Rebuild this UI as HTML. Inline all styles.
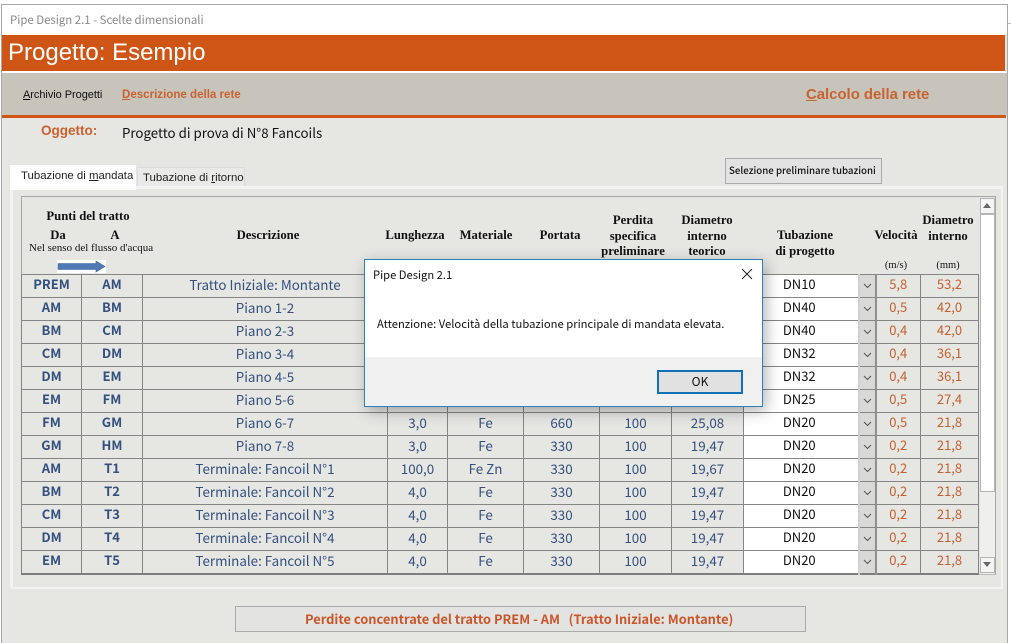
<!DOCTYPE html>
<html lang="it"><head><meta charset="utf-8"><title>Pipe Design 2.1</title>
<style>
html,body{margin:0;padding:0;background:#fff;width:1011px;height:643px;overflow:hidden}
body{position:relative;font-family:"Liberation Sans",sans-serif}
.a{position:absolute;white-space:nowrap}
.c{font-family:"Noto Sans CJK JP","Liberation Sans",sans-serif}
.s{font-family:"Liberation Serif",serif;font-weight:bold;font-size:12.7px;line-height:14px;color:#111;transform:translateX(-50%);text-align:center}
u{text-underline-offset:1px}
table{position:absolute;left:21px;top:274px;border-collapse:collapse;table-layout:fixed;width:957px;font-family:"Noto Sans CJK JP","Liberation Sans",sans-serif;font-size:13.4px;color:#34507f;text-align:center;border-bottom:2px solid #7d7d7d}
td{height:18px;padding:0 0 4px 0;border:1px solid #858585;line-height:18px;overflow:hidden;white-space:nowrap;box-sizing:content-box}
td.b{font-weight:bold;font-size:13px}
td.w{background:#fff;color:#111;border-right:0;padding-right:3px;font-size:13px}
td.d{background:#d9d9d7;padding:0;height:22px;border:1px solid #858585;border-width:1px 2px 1px 2px;border-color:#858585 #8f8f8f #858585 #d0d0ce}
td.o{color:#c4602f;font-size:13px}
td.d svg{display:block;margin:auto}
</style></head><body>

<div class="a" style="left:1006px;top:23px;width:5px;height:1px;background:#bbb"></div>
<div class="a" style="left:1px;top:4px;width:1007px;height:639px;background:#e6e6e3;border:1px solid #a8a8a8;border-bottom:0;box-sizing:border-box"></div>
<div class="a" style="left:2px;top:5px;width:1005px;height:30px;background:#fff"></div>
<div class="a c" style="left:10px;top:11px;font-size:11.4px;line-height:18px;color:#8a8a8a">Pipe Design 2.1 - Scelte dimensionali</div>
<div class="a" style="left:2px;top:35px;width:1003px;height:36px;background:#ce5516"></div>
<div class="a" style="left:2px;top:71px;width:1005px;height:2px;background:#fff"></div>
<div class="a" style="left:8px;top:38px;font-size:24px;line-height:29px;color:#fff">Progetto: Esempio</div>
<div class="a" style="left:2px;top:73px;width:1005px;height:42px;background:#c7c4bc"></div>
<div class="a" style="left:2px;top:115px;width:1004px;height:3px;background:#ce5516"></div>
<div class="a" style="left:23px;top:88px;font-size:11px;line-height:14px;letter-spacing:-.05px;color:#111"><u>A</u>rchivio Progetti</div>
<div class="a" style="left:122px;top:88px;font-size:11.55px;line-height:14px;font-weight:bold;color:#c9622f"><u>D</u>escrizione della rete</div>
<div class="a" style="left:806px;top:86px;font-size:14.9px;line-height:18px;font-weight:bold;color:#c9622f"><u>C</u>alcolo della rete</div>
<div class="a" style="left:41px;top:122px;font-size:13.5px;line-height:17px;font-weight:bold;color:#c9622f">Oggetto:</div>
<div class="a c" style="left:122px;top:124px;font-size:13.3px;line-height:18px;color:#111">Progetto di prova di N°8 Fancoils</div>

<div class="a" style="left:137px;top:167px;width:108px;height:21px;background:#e9e9e7;border:1px solid #dcdcdc;border-bottom:0;box-sizing:border-box"></div>
<div class="a" style="left:143px;top:171px;font-size:11.45px;line-height:14px;color:#222">Tubazione di <u>r</u>itorno</div>
<div class="a" style="left:725px;top:158px;width:157px;height:26px;background:#e3e3e3;border:1px solid #aaa;box-sizing:border-box"></div>
<div class="a c" style="left:729px;top:163px;font-size:9.7px;line-height:15px;font-weight:500;color:#111">Selezione preliminare tubazioni</div>

<div class="a" style="left:10px;top:186px;width:993px;height:403px;border:3px solid #f3f3f1;border-right-width:2px;border-bottom-width:2px;box-sizing:border-box"></div>
<div class="a" style="left:10px;top:165px;width:126px;height:25px;background:#fff"></div>
<div class="a" style="left:21px;top:169px;font-size:11.4px;line-height:14px;color:#222">Tubazione di <u>m</u>andata</div>
<div class="a" style="left:21px;top:196px;width:975px;height:379px;border:1px solid #a6a6a6;border-bottom-color:#bbb;box-sizing:border-box"></div>

<div class="a s" style="left:88px;top:209px">Punti del tratto</div>
<div class="a s" style="left:58px;top:228px">Da</div>
<div class="a s" style="left:115px;top:228px">A</div>
<div class="a" style="left:29px;top:242px;font-family:'Liberation Serif',serif;font-size:11px;line-height:13px;color:#111">Nel senso del flusso d'acqua</div>
<svg class="a" style="left:57px;top:260px" width="49" height="13" viewBox="0 0 49 13"><rect width="49" height="13" fill="#fff"/><path d="M1 3.5H39V1L48 6.5L39 12V9.5H1Z" fill="#4f7ab3" stroke="#3f6797" stroke-width=".6"/></svg>
<div class="a s" style="left:268px;top:228px">Descrizione</div>
<div class="a s" style="left:415px;top:228px">Lunghezza</div>
<div class="a s" style="left:486px;top:228px">Materiale</div>
<div class="a s" style="left:560px;top:228px">Portata</div>
<div class="a s" style="left:633px;top:213px;line-height:15.5px">Perdita<br>specifica<br>preliminare</div>
<div class="a s" style="left:707px;top:213px;line-height:15.5px">Diametro<br>interno<br>teorico</div>
<div class="a s" style="left:805px;top:228px;line-height:15.5px">Tubazione<br>di progetto</div>
<div class="a s" style="left:896px;top:228px">Velocità</div>
<div class="a s" style="left:948px;top:213px;line-height:15.5px">Diametro<br>interno</div>
<div class="a s" style="left:896px;top:259px;font-size:10.5px;font-weight:normal">(m/s)</div>
<div class="a s" style="left:948px;top:259px;font-size:10.5px;font-weight:normal">(mm)</div>

<table>
<colgroup><col style="width:60px"><col style="width:61px"><col style="width:245px"><col style="width:60px"><col style="width:76px"><col style="width:76px"><col style="width:72px"><col style="width:72px"><col style="width:115px"><col style="width:17px"><col style="width:45px"><col style="width:58px"></colgroup>
<tr><td class="b">PREM</td><td class="b">AM</td><td>Tratto Iniziale: Montante</td><td></td><td></td><td></td><td></td><td></td><td class="w">DN10</td><td class="d"><svg width="9" height="6"><path d="M1 1L4.5 4.5L8 1" fill="none" stroke="#555"/></svg></td><td class="o">5,8</td><td class="o">53,2</td></tr>
<tr><td class="b">AM</td><td class="b">BM</td><td>Piano 1-2</td><td></td><td></td><td></td><td></td><td></td><td class="w">DN40</td><td class="d"><svg width="9" height="6"><path d="M1 1L4.5 4.5L8 1" fill="none" stroke="#555"/></svg></td><td class="o">0,5</td><td class="o">42,0</td></tr>
<tr><td class="b">BM</td><td class="b">CM</td><td>Piano 2-3</td><td></td><td></td><td></td><td></td><td></td><td class="w">DN40</td><td class="d"><svg width="9" height="6"><path d="M1 1L4.5 4.5L8 1" fill="none" stroke="#555"/></svg></td><td class="o">0,4</td><td class="o">42,0</td></tr>
<tr><td class="b">CM</td><td class="b">DM</td><td>Piano 3-4</td><td></td><td></td><td></td><td></td><td></td><td class="w">DN32</td><td class="d"><svg width="9" height="6"><path d="M1 1L4.5 4.5L8 1" fill="none" stroke="#555"/></svg></td><td class="o">0,4</td><td class="o">36,1</td></tr>
<tr><td class="b">DM</td><td class="b">EM</td><td>Piano 4-5</td><td></td><td></td><td></td><td></td><td></td><td class="w">DN32</td><td class="d"><svg width="9" height="6"><path d="M1 1L4.5 4.5L8 1" fill="none" stroke="#555"/></svg></td><td class="o">0,4</td><td class="o">36,1</td></tr>
<tr><td class="b">EM</td><td class="b">FM</td><td>Piano 5-6</td><td></td><td></td><td></td><td></td><td></td><td class="w">DN25</td><td class="d"><svg width="9" height="6"><path d="M1 1L4.5 4.5L8 1" fill="none" stroke="#555"/></svg></td><td class="o">0,5</td><td class="o">27,4</td></tr>
<tr><td class="b">FM</td><td class="b">GM</td><td>Piano 6-7</td><td>3,0</td><td>Fe</td><td>660</td><td>100</td><td>25,08</td><td class="w">DN20</td><td class="d"><svg width="9" height="6"><path d="M1 1L4.5 4.5L8 1" fill="none" stroke="#555"/></svg></td><td class="o">0,5</td><td class="o">21,8</td></tr>
<tr><td class="b">GM</td><td class="b">HM</td><td>Piano 7-8</td><td>3,0</td><td>Fe</td><td>330</td><td>100</td><td>19,47</td><td class="w">DN20</td><td class="d"><svg width="9" height="6"><path d="M1 1L4.5 4.5L8 1" fill="none" stroke="#555"/></svg></td><td class="o">0,2</td><td class="o">21,8</td></tr>
<tr><td class="b">AM</td><td class="b">T1</td><td>Terminale: Fancoil N°1</td><td>100,0</td><td>Fe Zn</td><td>330</td><td>100</td><td>19,67</td><td class="w">DN20</td><td class="d"><svg width="9" height="6"><path d="M1 1L4.5 4.5L8 1" fill="none" stroke="#555"/></svg></td><td class="o">0,2</td><td class="o">21,8</td></tr>
<tr><td class="b">BM</td><td class="b">T2</td><td>Terminale: Fancoil N°2</td><td>4,0</td><td>Fe</td><td>330</td><td>100</td><td>19,47</td><td class="w">DN20</td><td class="d"><svg width="9" height="6"><path d="M1 1L4.5 4.5L8 1" fill="none" stroke="#555"/></svg></td><td class="o">0,2</td><td class="o">21,8</td></tr>
<tr><td class="b">CM</td><td class="b">T3</td><td>Terminale: Fancoil N°3</td><td>4,0</td><td>Fe</td><td>330</td><td>100</td><td>19,47</td><td class="w">DN20</td><td class="d"><svg width="9" height="6"><path d="M1 1L4.5 4.5L8 1" fill="none" stroke="#555"/></svg></td><td class="o">0,2</td><td class="o">21,8</td></tr>
<tr><td class="b">DM</td><td class="b">T4</td><td>Terminale: Fancoil N°4</td><td>4,0</td><td>Fe</td><td>330</td><td>100</td><td>19,47</td><td class="w">DN20</td><td class="d"><svg width="9" height="6"><path d="M1 1L4.5 4.5L8 1" fill="none" stroke="#555"/></svg></td><td class="o">0,2</td><td class="o">21,8</td></tr>
<tr><td class="b">EM</td><td class="b">T5</td><td>Terminale: Fancoil N°5</td><td>4,0</td><td>Fe</td><td>330</td><td>100</td><td>19,47</td><td class="w">DN20</td><td class="d"><svg width="9" height="6"><path d="M1 1L4.5 4.5L8 1" fill="none" stroke="#555"/></svg></td><td class="o">0,2</td><td class="o">21,8</td></tr>
</table>

<!-- scrollbar -->
<div class="a" style="left:980px;top:198px;width:15px;height:376px;background:#efefed"></div>
<div class="a" style="left:980px;top:214px;width:15px;height:278px;background:#fff;border:1px solid #b5b5b5;box-sizing:border-box"></div>
<div class="a" style="left:980px;top:198px;width:15px;height:16px;background:#f4f4f4;border:1px solid #b5b5b5;box-sizing:border-box"></div>
<svg class="a" style="left:983px;top:203px" width="9" height="6"><path d="M0 5H8L4 0Z" fill="#666"/></svg>
<div class="a" style="left:980px;top:557px;width:15px;height:16px;background:#f4f4f4;border:1px solid #b5b5b5;box-sizing:border-box"></div>
<svg class="a" style="left:983px;top:562px" width="9" height="6"><path d="M0 0H8L4 5Z" fill="#666"/></svg>

<!-- bottom button -->
<div class="a" style="left:235px;top:606px;width:571px;height:26px;background:#e3e3e1;border:1px solid #aaa;box-sizing:border-box"></div>
<div class="a c" style="left:305px;top:609px;font-size:12.85px;line-height:19px;font-weight:bold;color:#c9562a;white-space:pre">Perdite concentrate del tratto PREM - AM   (Tratto Iniziale: Montante)</div>

<!-- dialog -->
<div class="a" style="left:364px;top:259px;width:399px;height:148px;background:#fff;border:1px solid #2f80bf;box-sizing:border-box;box-shadow:3px 4px 14px rgba(0,0,0,.3)">
  <div class="a" style="left:0;top:97px;width:397px;height:49px;background:#f0f0f0"></div>
</div>
<div class="a c" style="left:373px;top:266px;font-size:11.2px;line-height:18px;color:#111">Pipe Design 2.1</div>
<svg class="a" style="left:741px;top:268px" width="12" height="12"><path d="M1 1L11 11M11 1L1 11" stroke="#222" stroke-width="1"/></svg>
<div class="a c" style="left:377px;top:315px;font-size:11.24px;line-height:18px;color:#111">Attenzione: Velocità della tubazione principale di mandata elevata.</div>
<div class="a" style="left:657px;top:370px;width:86px;height:24px;background:#e1e1e1;border:2px solid #1071b8;box-sizing:border-box"></div>
<div class="a c" style="left:657px;top:373px;width:86px;text-align:center;font-size:12px;line-height:18px;color:#111">OK</div>
</body></html>
